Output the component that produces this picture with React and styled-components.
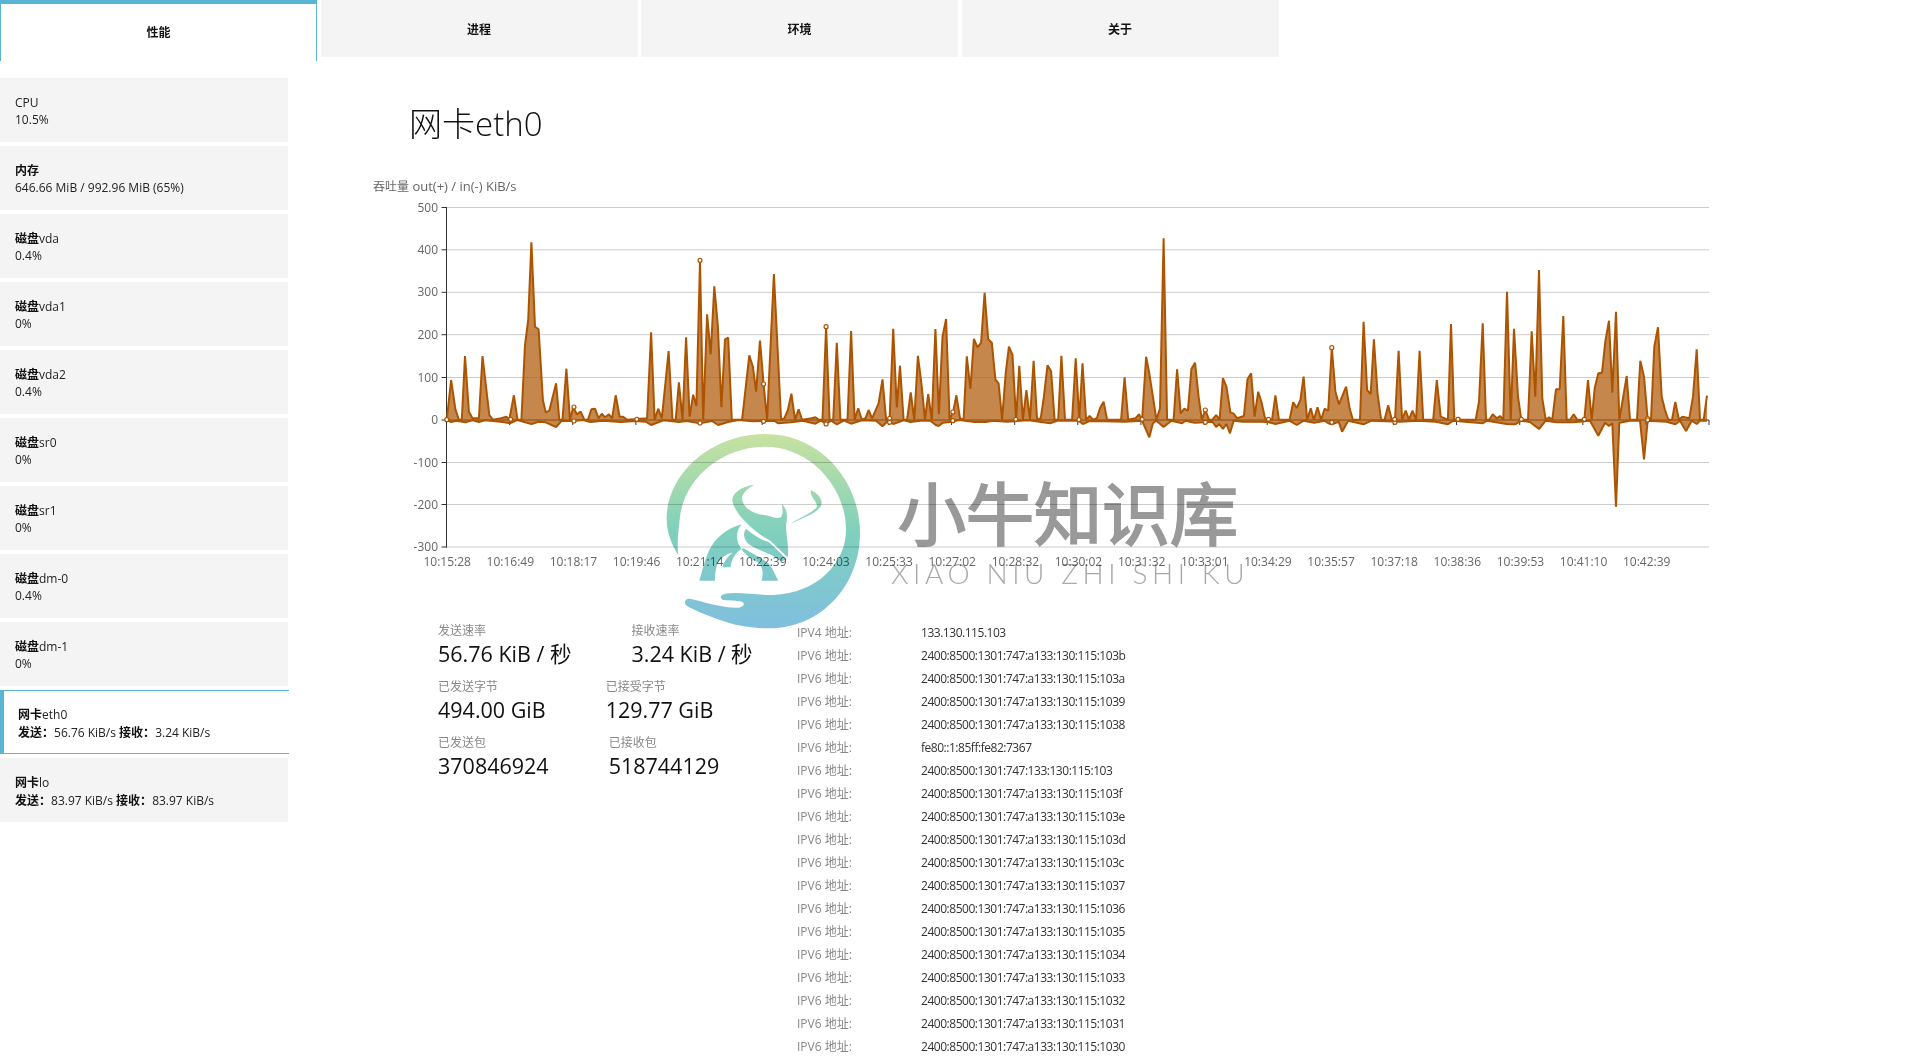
import React from "react";
import styled, { createGlobalStyle } from "styled-components";

const FONT = `"Open Sans", "Noto Sans CJK SC", "Liberation Sans", sans-serif`;

const Global = createGlobalStyle`
  html, body { margin: 0; padding: 0; background: #fff; overflow: hidden; height: 1061px; }
  body { font-family: ${FONT}; font-size: 12px; color: #333; }
  #root { position: relative; height: 1061px; overflow: hidden; }
`;

const Tabs = styled.nav`
  display: flex;
  gap: 3.5px;
  align-items: flex-start;
  height: 61px;
`;
const Tab = styled.div`
  width: 317px;
  box-sizing: border-box;
  height: ${(p) => (p.$active ? "61px" : "57px")};
  padding-bottom: ${(p) => (p.$active ? "2px" : "0")};
  background: ${(p) => (p.$active ? "#fff" : "#f4f4f4")};
  border-top: ${(p) => (p.$active ? "4px solid #5ab4d3" : "0")};
  border-left: ${(p) => (p.$active ? "1px solid #5ab4d3" : "0")};
  border-right: ${(p) => (p.$active ? "1px solid #5ab4d3" : "0")};
  display: flex;
  justify-content: center;
  align-items: center;
  font-size: 12px;
  font-weight: 700;
  color: #111;
`;
const Body = styled.div`
  display: flex;
  align-items: flex-start;
`;
const Sidebar = styled.aside`
  width: 289px;
  flex: none;
  padding-top: 17px;
  display: flex;
  flex-direction: column;
  gap: 4px;
`;
const Panel = styled.div`
  box-sizing: border-box;
  height: 64px;
  line-height: 17px;
  font-size: 12px;
  color: #222;
  width: ${(p) => (p.$active ? "289px" : "288px")};
  background: ${(p) => (p.$active ? "#fff" : "#f4f4f4")};
  border: ${(p) => (p.$active ? "1px solid #5ab4d3" : "0")};
  border-right: 0;
  border-left: ${(p) => (p.$active ? "4px solid #5ab4d3" : "0")};
  padding: ${(p) => (p.$active ? "14px 0 0 14px" : "15px 0 0 15px")};
`;
const PanelLine = styled.div`
  white-space: nowrap;
`;
const Strong = styled.b`
  font-weight: 700;
  color: #111;
  font-family: "Noto Sans CJK SC", sans-serif;
`;
const Main = styled.main`
  flex: 1;
  min-width: 0;
`;
const Heading = styled.h1`
  margin: 41px 0 24px 120px;
  font-size: 33px;
  line-height: 44px;
  font-weight: 300;
  color: #111;
`;
const ChartSvg = styled.svg`
  display: block;
  margin-left: 51px;
`;
const Details = styled.section`
  display: flex;
  margin-top: 41px;
  padding-left: 149px;
`;
const Stats = styled.div`
  width: 359px;
  flex: none;
  display: flex;
  flex-direction: column;
`;
const StatRow = styled.div`
  display: flex;
  gap: 60px;
  height: 56px;
  align-items: flex-start;
`;
const StatLabel = styled.div`
  font-size: 12px;
  line-height: 20px;
  color: #888;
`;
const StatValue = styled.div`
  font-size: 21.5px;
  line-height: 26px;
  color: #111;
  white-space: nowrap;
`;
const AddrTable = styled.div`
  display: flex;
  flex-direction: column;
`;
const AddrRow = styled.div`
  display: flex;
  height: 23px;
  line-height: 23px;
  font-size: 12px;
`;
const AddrLabel = styled.span`
  width: 124px;
  color: #888;
`;
const AddrValue = styled.span`
  color: #333;
  letter-spacing: -0.47px;
`;
const Watermark = styled.div`
  position: absolute;
  left: 640px;
  top: 410px;
  width: 620px;
  height: 240px;
  mix-blend-mode: multiply;
  pointer-events: none;
`;
const LogoSvg = styled.svg`
  position: absolute;
  left: 20px;
  top: 20px;
`;
const BrandName = styled.div`
  position: absolute;
  left: 258px;
  top: 67px;
  font-family: "Noto Sans CJK SC", sans-serif;
  font-size: 68px;
  line-height: 1;
  color: #999;
  -webkit-text-stroke: 2px #999;
  white-space: nowrap;
`;
const BrandPinyin = styled.div`
  position: absolute;
  left: 251px;
  top: 149px;
  font-family: "Lato", sans-serif;
  font-weight: 300;
  font-size: 28px;
  line-height: 1;
  letter-spacing: 4.6px;
  color: #aaa;
  white-space: nowrap;
`;

/* ---------- traced chart data, in zoom-crop coordinates ---------- */
const z2 = (a) => a.map(([x, y]) => [360 + x / 2.8, 170 + y / 3]);
const z3 = (a) => a.map(([x, y]) => [900 + x / 2.8, 170 + y / 3]);
const z4 = (a) => a.map(([x, y]) => [1300 + x / 3, 170 + y / 3]);

const outLine = [
  ...z2([[243,749],[255,630],[267,718],[277,749],[285,749],[294,558],[305,725],[315,745],[333,745],[343,558],[362,735],[372,749],[395,745],[410,740],[418,749],[431,676],[441,749],[452,749],[462,525],[471,450],[480,217],[490,470],[500,478],[512,690],[520,727],[530,722],[549,640],[558,749],[567,749],[578,596],[588,749],[597,712],[607,733],[618,725],[628,749],[638,749],[648,718],[658,716],[668,745],[677,731],[686,742],[697,733],[706,745],[716,676],[727,740],[737,740],[748,749],[804,745],[815,487],[825,749],[835,716],[845,745],[855,640],[864,543],[875,749],[884,749],[893,637],[903,749],[913,502],[923,740],[933,674],[942,708],[952,272],[961,749],[972,433],[982,553],[992,349],[1002,470],[1012,712],[1022,508],[1031,503],[1041,749],[1070,749],[1090,556],[1100,590],[1109,665],[1120,512],[1130,643],[1140,749],[1159,312],[1179,749],[1188,745],[1198,720],[1208,671],[1218,749],[1228,718],[1238,749],[1265,745],[1275,742],[1285,749],[1295,749],[1305,470],[1315,749],[1325,749],[1335,518],[1345,749],[1365,749],[1375,483],[1385,749],[1395,715],[1405,749],[1415,745],[1424,720],[1434,745],[1452,700],[1463,628],[1473,749],[1483,749],[1493,476],[1503,712],[1512,587],[1522,749],[1532,749],[1542,667],[1552,749]]),
  ...z3([[50,557],[60,640],[70,749],[79,672],[89,749],[99,477],[109,733],[119,500],[129,447],[139,749],[149,725],[158,676],[168,745],[178,749],[187,559],[197,657],[207,507],[217,532],[227,518],[237,368],[247,508],[257,518],[267,628],[276,640],[286,749],[296,610],[305,530],[315,555],[325,749],[334,587],[344,749],[354,660],[364,749],[374,572],[384,749],[394,745],[403,680],[413,586],[423,604],[433,749],[443,749],[452,557],[462,749],[482,749],[492,565],[502,749],[511,580],[521,749],[531,738],[541,749],[551,745],[560,715],[570,695],[580,749],[619,749],[629,622],[639,749],[659,745],[669,733],[678,749],[689,560],[698,610],[708,680],[718,749],[728,715],[738,205],[748,749],[766,749],[776,598],[786,730],[796,716],[806,722],[816,597],[826,578],[836,680],[845,749],[855,720],[865,749],[875,749],[885,735],[895,749],[904,624],[914,650],[925,727],[934,731],[944,745],[963,738],[973,628],[983,610],[993,740],[1003,665],[1012,695],[1022,745],[1032,749],[1042,749],[1051,676],[1061,749],[1091,749],[1101,697],[1111,714],[1121,690],[1130,620],[1140,749],[1150,715],[1159,749],[1169,712],[1179,749],[1189,716],[1199,722],[1209,533],[1219,665],[1229,703],[1249,650],[1259,715],[1268,749],[1288,749],[1298,455],[1308,660],[1318,672],[1327,508],[1337,670],[1347,749],[1357,749],[1367,706],[1377,749],[1386,749],[1396,542],[1406,749],[1416,722],[1425,749],[1435,722],[1445,749],[1455,542],[1465,749],[1493,749],[1503,630],[1514,740],[1534,749]]),
  ...z4([[453,462],[463,749],[527,749],[537,695],[548,460],[558,749],[568,749],[578,733],[590,745],[600,738],[610,749],[621,365],[632,749],[642,476],[654,680],[664,749],[684,749],[695,484],[706,680],[717,300],[727,685],[737,749],[747,742],[757,749],[768,658],[779,658],[790,438],[800,749],[810,749],[821,733],[832,749],[853,749],[864,630],[875,749],[884,655],[895,610],[906,608],[916,515],[927,452],[937,668],[948,425],[958,749],[968,690],[980,618],[990,749],[1011,749],[1021,572],[1032,620],[1043,749],[1053,749],[1063,530],[1074,472],[1085,680],[1095,720],[1105,749],[1116,749],[1126,696],[1137,749],[1147,740],[1168,745],[1179,680],[1190,538],[1200,749],[1211,749],[1221,677]]),
];

const inLine = [
  ...z2([[243,749],[255,756],[270,752],[295,757],[315,751],[333,756],[350,751],[400,756],[420,760],[440,750],[480,762],[500,755],[520,757],[549,771],[565,752],[597,753],[625,750],[645,756],[680,752],[730,756],[770,753],[800,755],[815,765],[850,751],[893,756],[915,753],[952,760],[985,753],[1003,765],[1030,756],[1060,750],[1100,754],[1160,752],[1170,760],[1207,757],[1240,752],[1275,761],[1290,752],[1305,761],[1320,752],[1335,763],[1355,752],[1375,761],[1405,751],[1445,752],[1463,769],[1478,752],[1493,762],[1522,751],[1542,756]]),
  ...z3([[56,752],[85,752],[100,765],[108,768],[120,758],[145,755],[165,750],[210,756],[240,756],[260,752],[300,755],[360,751],[420,760],[440,752],[500,752],[512,762],[530,753],[570,754],[630,755],[678,752],[698,802],[708,760],[718,752],[738,771],[760,752],[790,760],[800,752],[825,758],[855,757],[875,755],[885,771],[894,762],[904,777],[914,762],[924,790],[934,752],[960,755],[1010,755],[1030,756],[1051,762],[1090,752],[1111,765],[1130,752],[1160,758],[1189,752],[1200,760],[1209,763],[1228,755],[1238,785],[1255,752],[1298,763],[1320,752],[1400,755],[1450,752],[1500,755],[1534,763]]),
  ...z4([[445,762],[460,752],[548,760],[560,752],[620,762],[645,763],[664,752],[690,756],[717,777],[737,752],[770,757],[820,757],[870,752],[895,797],[915,758],[927,768],[937,760],[948,1010],[958,758],[990,752],[1020,752],[1032,868],[1043,752],[1100,755],[1126,763],[1140,752],[1158,783],[1175,752],[1190,762],[1200,752],[1221,752]]),
];

const markers = [
  ...z2([[243,749],[422,748],[599,711],[599,753],[775,748],[952,271],[952,759],[1130,642],[1130,754],[1305,470],[1305,762],[1483,745],[1483,757]]),
  ...z3([[148,726],[148,752],[324,748],[501,749],[678,748],[855,720],[855,757],[1032,748],[1209,533],[1209,757],[1386,748],[1386,757],[1563,748]]),
  ...z4([[284,748],[474,748],[664,748],[853,748],[1043,746],[1043,750]]),
];

const BASE = 420;
const pts = (a) => a.map(([x, y]) => `${x.toFixed(1)},${y.toFixed(1)}`).join(" ");
const area = (a) => `${a[0][0].toFixed(1)},${BASE} ${pts(a)} ${a[a.length - 1][0].toFixed(1)},${BASE}`;

const yTicks = [
  ["500", 207.5], ["400", 249.8], ["300", 292.3], ["200", 334.7], ["100", 377.5],
  ["0", 420], ["-100", 462.5], ["-200", 504.5], ["-300", 547],
];
const xLabels = ["10:15:28","10:16:49","10:18:17","10:19:46","10:21:14","10:22:39","10:24:03","10:25:33","10:27:02","10:28:32","10:30:02","10:31:32","10:33:01","10:34:29","10:35:57","10:37:18","10:38:36","10:39:53","10:41:10","10:42:39"];
const X0 = 446.5;
const XSTEP = 63.13;

function Chart() {
  return (
    <ChartSvg width="1400" height="410" viewBox="340 170 1400 410" fontFamily={FONT}>
      <text x="373" y="191" fontSize="12" fill="#666">
        吞吐量<tspan fontSize="13"> out(+) / in(-) KiB/s</tspan>
      </text>
      {yTicks.map(([l, y]) => (
        <g key={l}>
          {l !== "0" && <line x1={X0} x2="1709" y1={y} y2={y} stroke="#ccc" strokeWidth="1" />}
          <line x1={X0 - 5} x2={X0} y1={y} y2={y} stroke="#333" strokeWidth="1" />
          <text x="438" y={y + 4} fontSize="12" fill="#666" textAnchor="end">{l}</text>
        </g>
      ))}
      <line x1={X0} x2={X0} y1="207" y2="547.5" stroke="#333" strokeWidth="1" />
      <line x1={X0} x2="1709" y1={BASE} y2={BASE} stroke="#333" strokeWidth="1" />
      {xLabels.map((l, i) => (
        <g key={l}>
          <line x1={X0 + i * XSTEP} x2={X0 + i * XSTEP} y1={BASE} y2={BASE + 5} stroke="#333" strokeWidth="1" />
          <text x={X0 + 0.7 + i * XSTEP} y="566" fontSize="12" fill="#666" textAnchor="middle">{l}</text>
        </g>
      ))}
      <line x1="1709" x2="1709" y1={BASE} y2={BASE + 5} stroke="#333" strokeWidth="1" />
      <polygon points={area(outLine)} fill="#ad5400" fillOpacity="0.7" />
      <polygon points={area(inLine)} fill="#ad5400" fillOpacity="0.7" />
      <polyline points={pts(outLine)} fill="none" stroke="#ad5400" strokeWidth="2" strokeLinejoin="bevel" />
      <polyline points={pts(inLine)} fill="none" stroke="#ad5400" strokeWidth="2" strokeLinejoin="bevel" />
      {markers.map(([x, y], i) => (
        <circle key={i} cx={x} cy={y} r="2" fill="#fff" stroke="#ad5400" strokeWidth="1.2" />
      ))}
    </ChartSvg>
  );
}

function Logo() {
  return (
    <LogoSvg width="210" height="205" viewBox="0 0 630 615">
      <defs>
        <linearGradient id="logoFade" gradientUnits="userSpaceOnUse" x1="0" y1="12" x2="0" y2="595">
          <stop offset="0" stopColor="#c8e2a0" />
          <stop offset="0.5" stopColor="#7fd0bd" />
          <stop offset="1" stopColor="#80bfde" />
        </linearGradient>
      </defs>
      <g fill="url(#logoFade)">
        <path d="M55,375 C25,330 15,280 22,240 C40,110 170,12 315,12 C480,12 600,150 600,310 C600,470 480,595 330,595 C270,595 220,585 180,570 C140,555 100,540 80,527 C70,518 75,505 90,506 C120,512 170,530 225,533 C245,535 255,525 250,518 C240,510 215,513 190,510 C178,505 180,495 195,491 C240,485 290,496 340,495 C470,490 558,400 558,300 C558,170 450,50 315,50 C190,50 75,140 60,260 C55,305 50,345 55,375 Z" />
        <path d="M283,164 C245,168 215,190 217,212 C222,240 245,265 268,287 C285,300 305,320 328,330 C345,345 365,365 383,382 C388,350 378,320 378,285 C385,255 380,235 365,222 C368,235 370,255 362,262 C345,268 330,256 310,255 C285,252 258,240 248,215 C240,195 258,178 283,164 Z" />
        <path d="M258,296 C275,310 300,330 325,335 C345,352 365,372 380,388 C370,395 360,395 350,385 C335,370 290,360 270,345 C250,330 248,310 258,296 Z" />
        <path d="M245,283 C200,295 165,325 148,360 C132,395 125,430 118,452 L165,452 C165,425 168,400 185,385 C195,375 205,370 218,368 C205,378 190,395 187,412 L212,412 C212,395 225,365 250,355 C275,370 310,385 330,405 C340,420 348,440 355,452 L305,452 C310,430 310,415 296,398 C270,385 240,365 232,330 C228,310 235,295 245,283 Z" />
        <path d="M452,180 C475,190 490,210 483,228 C465,255 420,265 393,282 C410,265 450,255 470,232 C475,215 450,205 452,180 Z" />
      </g>
    </LogoSvg>
  );
}

const tabs = ["性能", "进程", "环境", "关于"];
const panels = [
  { head: "", tail: "CPU", sub: "10.5%" },
  { head: "内存", tail: "", sub: "646.66 MiB / 992.96 MiB (65%)" },
  { head: "磁盘", tail: "vda", sub: "0.4%" },
  { head: "磁盘", tail: "vda1", sub: "0%" },
  { head: "磁盘", tail: "vda2", sub: "0.4%" },
  { head: "磁盘", tail: "sr0", sub: "0%" },
  { head: "磁盘", tail: "sr1", sub: "0%" },
  { head: "磁盘", tail: "dm-0", sub: "0.4%" },
  { head: "磁盘", tail: "dm-1", sub: "0%" },
  { head: "网卡", tail: "eth0", net: ["56.76 KiB/s", "3.24 KiB/s"], active: true },
  { head: "网卡", tail: "lo", net: ["83.97 KiB/s", "83.97 KiB/s"] },
];
const statRows = [
  [["发送速率", "56.76 KiB / 秒"], ["接收速率", "3.24 KiB / 秒"]],
  [["已发送字节", "494.00 GiB"], ["已接受字节", "129.77 GiB"]],
  [["已发送包", "370846924"], ["已接收包", "518744129"]],
];
const addrs = [
  ["IPV4 地址:", "133.130.115.103"],
  ...["a133:130:115:103b","a133:130:115:103a","a133:130:115:1039","a133:130:115:1038"].map((s) => ["IPV6 地址:", `2400:8500:1301:747:${s}`]),
  ["IPV6 地址:", "fe80::1:85ff:fe82:7367"],
  ...["133:130:115:103","a133:130:115:103f","a133:130:115:103e","a133:130:115:103d","a133:130:115:103c","a133:130:115:1037","a133:130:115:1036","a133:130:115:1035","a133:130:115:1034","a133:130:115:1033","a133:130:115:1032","a133:130:115:1031","a133:130:115:1030"].map((s) => ["IPV6 地址:", `2400:8500:1301:747:${s}`]),
];

export default function App() {
  return (
    <>
      <Global />
      <Tabs>
        {tabs.map((t, i) => (
          <Tab key={t} $active={i === 0}>{t}</Tab>
        ))}
      </Tabs>
      <Body>
        <Sidebar>
          {panels.map((p) => (
            <Panel key={p.head + p.tail} $active={p.active}>
              <PanelLine><Strong>{p.head}</Strong>{p.tail}</PanelLine>
              <PanelLine>
                {p.net ? (
                  <>
                    <Strong>发送：</Strong>{p.net[0]} <Strong>接收：</Strong>{p.net[1]}
                  </>
                ) : (
                  p.sub
                )}
              </PanelLine>
            </Panel>
          ))}
        </Sidebar>
        <Main>
          <Heading>网卡eth0</Heading>
          <Chart />
          <Details>
            <Stats>
              {statRows.map((row) => (
                <StatRow key={row[0][0]}>
                  {row.map(([label, value]) => (
                    <div key={label}>
                      <StatLabel>{label}</StatLabel>
                      <StatValue>{value}</StatValue>
                    </div>
                  ))}
                </StatRow>
              ))}
            </Stats>
            <AddrTable>
              {addrs.map(([l, v]) => (
                <AddrRow key={v}>
                  <AddrLabel>{l}</AddrLabel>
                  <AddrValue>{v}</AddrValue>
                </AddrRow>
              ))}
            </AddrTable>
          </Details>
        </Main>
      </Body>
      <Watermark>
        <Logo />
        <BrandName>小牛知识库</BrandName>
        <BrandPinyin>XIAO NIU ZHI SHI KU</BrandPinyin>
      </Watermark>
    </>
  );
}
